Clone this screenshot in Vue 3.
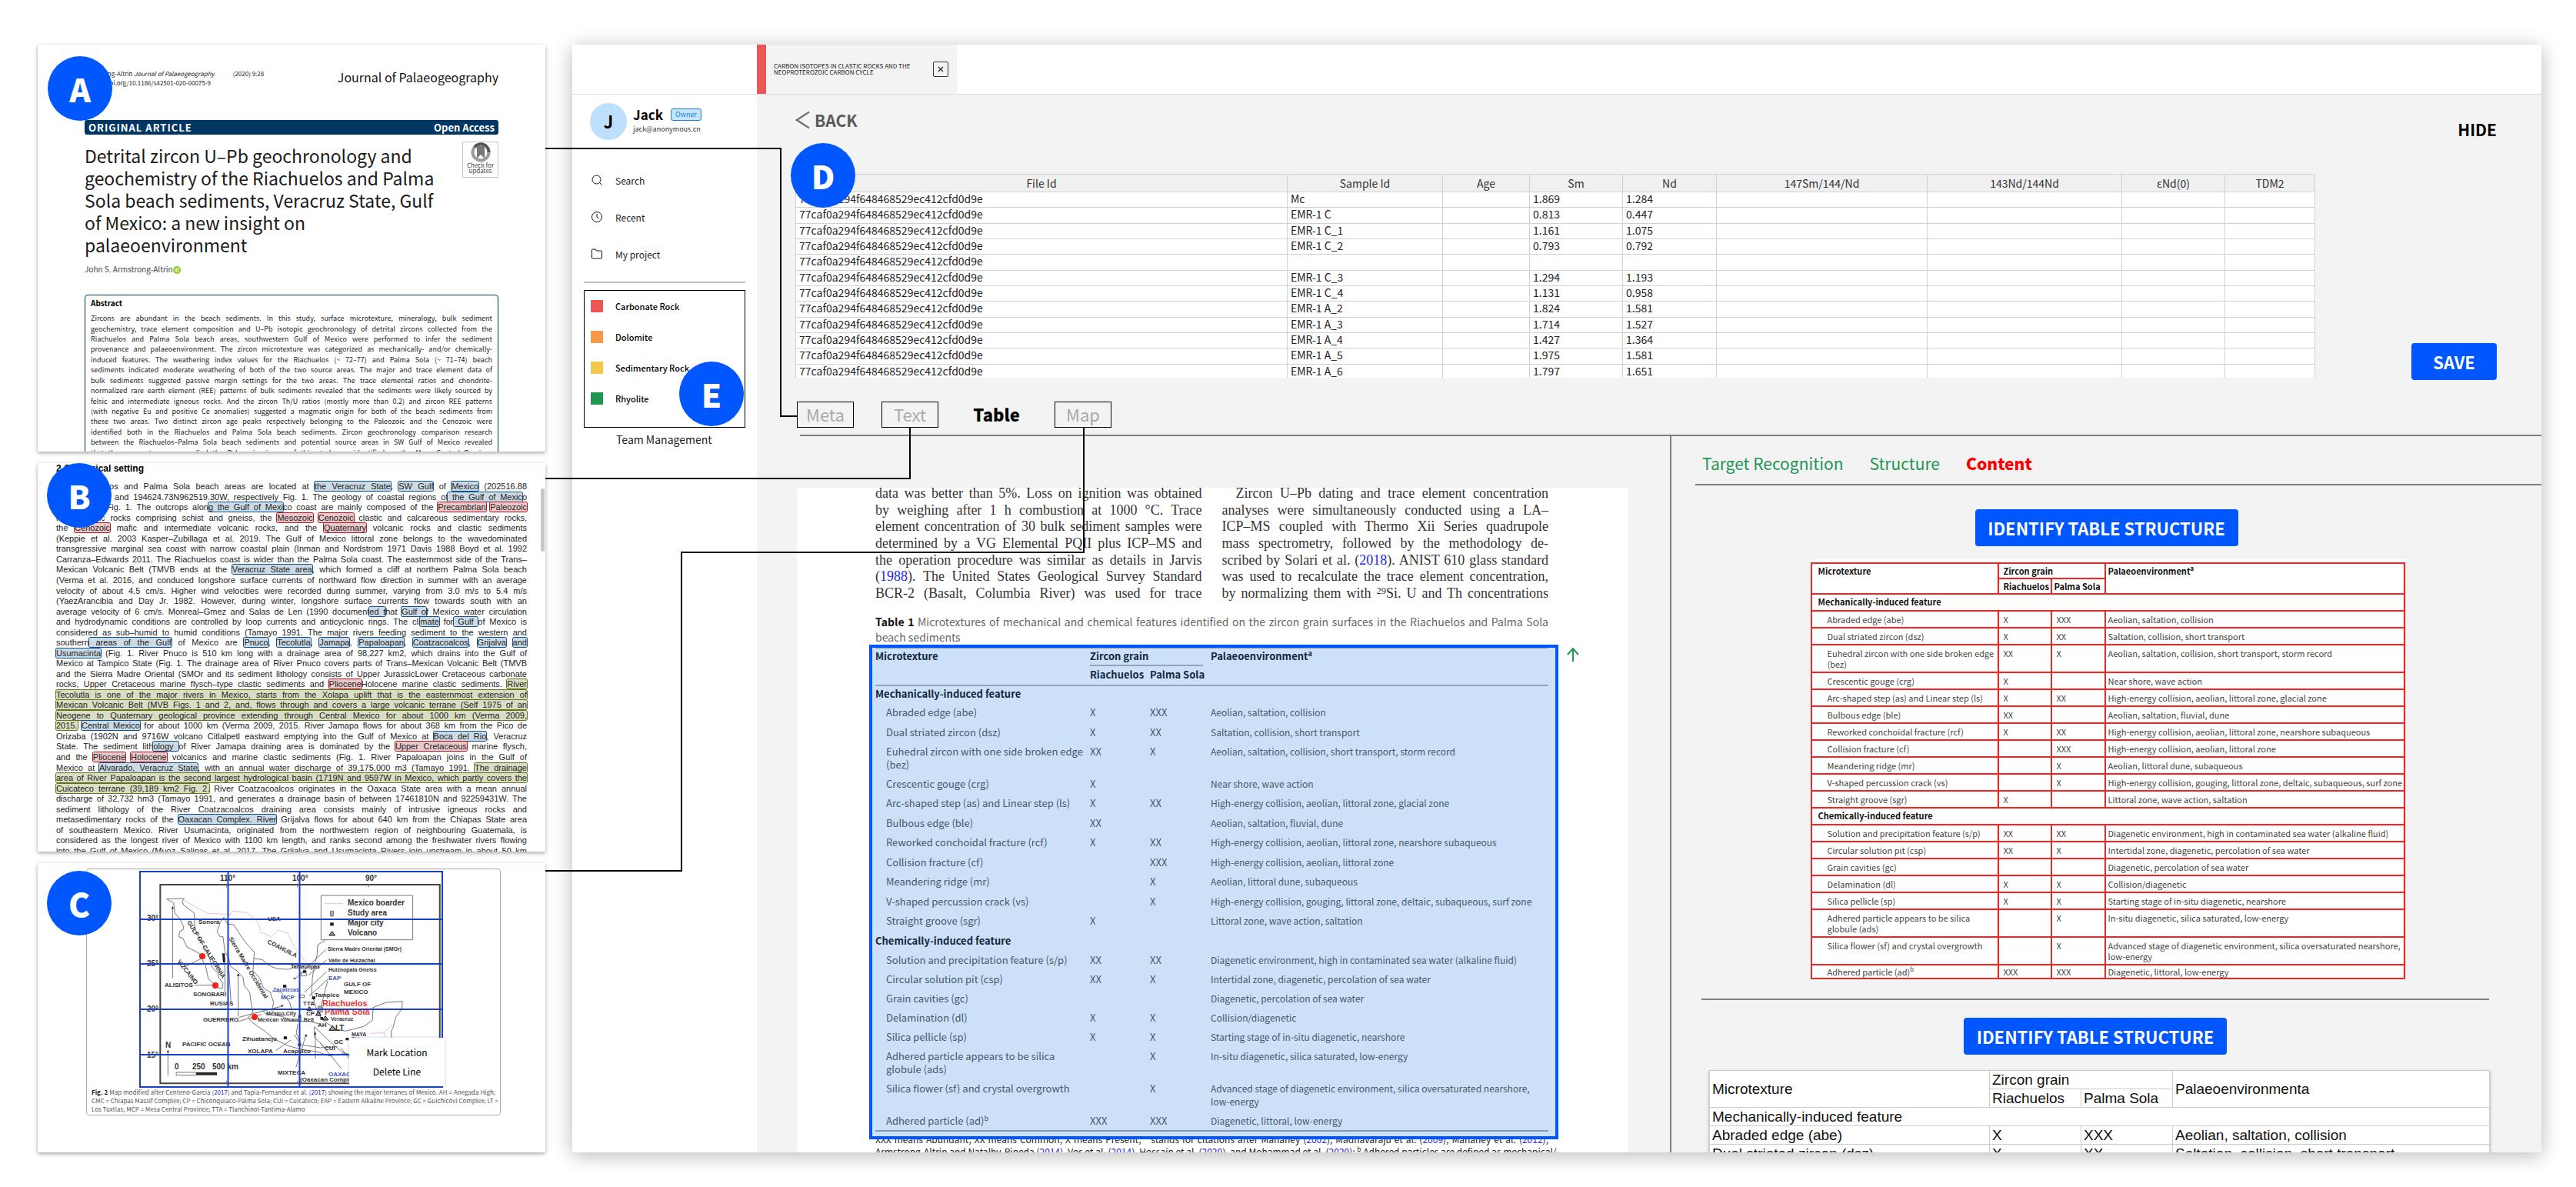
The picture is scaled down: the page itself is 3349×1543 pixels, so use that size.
<script setup>
const TAGS = { b: 'mark', r: 'mark', g: 'mark', l: 'a', s: 'sup', i: 'em', k: 'strong' }

// Inline notation: {x:text} where x picks the tag and its class.
function parse(line) {
  return line.split(/(\{[a-z]:[^}]*\})/).filter(Boolean).map((part) => {
    const m = part.match(/^\{([a-z]):([^}]*)\}$/)
    if (!m) return { tag: 'span', cls: '', text: part }
    return { tag: TAGS[m[1]], cls: 'm-' + m[1], text: m[2], href: m[1] === 'l' ? '#' : undefined }
  })
}

const abstractLines = [
  'Zircons are abundant in the beach sediments. In this study, surface microtexture, mineralogy, bulk sediment',
  'geochemistry, trace element composition and U–Pb isotopic geochronology of detrital zircons collected from the',
  'Riachuelos and Palma Sola beach areas, southwestern Gulf of Mexico were performed to infer the sediment',
  'provenance and palaeoenvironment. The zircon microtexture was categorized as mechanically- and/or chemically-',
  'induced features. The weathering index values for the Riachuelos (~ 72–77) and Palma Sola (~ 71–74) beach',
  'sediments indicated moderate weathering of both of the two source areas. The major and trace element data of',
  'bulk sediments suggested passive margin settings for the two areas. The trace elemental ratios and chondrite-',
  'normalized rare earth element (REE) patterns of bulk sediments revealed that the sediments were likely sourced by',
  'felsic and intermediate igneous rocks. And the zircon Th/U ratios (mostly more than 0.2) and zircon REE patterns',
  '(with negative Eu and positive Ce anomalies) suggested a magmatic origin for both of the beach sediments from',
  'these two areas. Two distinct zircon age peaks respectively belonging to the Paleozoic and the Cenozoic were',
  'identified both in the Riachuelos and Palma Sola beach sediments. Zircon geochronology comparison research',
  'between the Riachuelos–Palma Sola beach sediments and potential source areas in SW Gulf of Mexico revealed',
  'that the source terranes supplied the Paleozoic zircons of this study are identified as the Mesa Central Province',
]

const geoLines = [
  'The Riachuelos and Palma Sola beach areas are located at {b:the Veracruz State}, {b:SW Gulf} of {b:Mexico} (202516.88',
  'N962519.30W and 194624.73N962519.30W, respectively Fig. 1. The geology of coastal regions of{b: the Gulf of Mexic}o',
  'is shown in Fig. 1. The outcrops alon{b:g the Gulf of Mexi}co coast are mainly composed of the {r:Precambrian} {r:Paleozoic}',
  'metamorphic rocks comprising schist and gneiss, the {r:Mesozoic} {r:Cenozoic} clastic and calcareous sedimentary rocks,',
  'the {r:Cenozoic} mafic and intermediate volcanic rocks, and the {r:Quaternary} volcanic rocks and clastic sediments',
  '(Keppie et al. 2003 Kasper–Zubillaga et al. 2019. The Gulf of Mexico littoral zone belongs to the wavedominated',
  'transgressive marginal sea coast with narrow coastal plain (Inman and Nordstrom 1971 Davis 1988 Boyd et al. 1992',
  'Carranza–Edwards 2011. The Riachuelos coast is wider than the Palma Sola coast. The easternmost side of the Trans–',
  'Mexican Volcanic Belt (TMVB ends at the {b:Veracruz State area}, which formed a cliff at northern Palma Sola beach',
  '(Verma et al. 2016, and conduced longshore surface currents of northward flow direction in summer with an average',
  'velocity of about 4.5 cm/s. Higher wind velocities were recorded during summer, varying from 3.0 m/s to 5.4 m/s',
  '(YaezArancibia and Day Jr. 1982. However, during winter, longshore surface currents flow towards south with an',
  'average velocity of 6 cm/s. Monreal–Gmez and Salas de Len (1990 document{b:ed t}hat {b:Gulf o}f Mexico water circulation',
  'and hydrodynamic conditions are controlled by loop currents and anticyclonic rings. The cli{b:mate} for{b: Gulf }of Mexico is',
  'considered as sub–humid to humid conditions (Tamayo 1991. The major rivers feeding sediment to the western and',
  'southern{b: areas of the Gulf} of Mexico are {b:Pnuco}, {b:Tecolutla}, {b:Jamapa}, {b:Papaloapan}, {b:Coatzacoalcos}, {b:Grijalva} {b:and}',
  '{b:Usumacinta} (Fig. 1. River Pnuco is 510 km long with a drainage area of 98,227 km2, which drains into the Gulf of',
  'Mexico at Tampico State (Fig. 1. The drainage area of River Pnuco covers parts of Trans–Mexican Volcanic Belt (TMVB',
  'and the Sierra Madre Oriental (SMOr and its sediment lithology consists of Upper JurassicLower Cretaceous carbonate',
  'rocks, Upper Cretaceous marine flysch–type clastic sediments and {r:Pliocene}Holocene marine clastic sediments. {g:River}',
  '{g:Tecolutla is one of the major rivers in Mexico, starts from the Xolapa uplift that is the easternmost extension of}',
  '{g:Mexican Volcanic Belt (MVB Figs. 1 and 2, and, flows through and covers a large volcanic terrane (Self 1975 of an}',
  '{g:Neogene to Quaternary geological province extending through Central Mexico for about 1000 km (Verma 2009,}',
  '{g:2015.} {b:Central Mexico} for about 1000 km (Verma 2009, 2015. River Jamapa flows for about 368 km from the Pico de',
  'Orizaba (1902N and 9716W volcano Citlalpetl eastward emptying into the Gulf of Mexico at {b:Boca del Rio}, Veracruz',
  'State. The sediment lith{b:ology }of River Jamapa draining area is dominated by the {r:Upper Cretaceous} marine flysch,',
  'and the {r:Pliocene} {r:Holocene} volcanics and marine clastic sediments (Fig. 1. River Papaloapan joins in the Gulf of',
  'Mexico at {b:Alvarado, Veracruz State}, with an annual water discharge of 39,175,000 m3 (Tamayo 1991. {g:The drainage}',
  '{g:area of River Papaloapan is the second largest hydrological basin (1719N and 9597W in Mexico, which partly covers the}',
  '{g:Cuicateco terrane (39,189 km2 Fig. 2.} River Coatzacoalcos originates in the Oaxaca State area with a mean annual',
  'discharge of 32,732 hm3 (Tamayo 1991, and generates a drainage basin of between 17461810N and 92259431W. The',
  'sediment lithology of the River Coatzacoalcos draining area consists mainly of intrusive igneous rocks and',
  'metasedimentary rocks of the {b:Oaxacan Complex. River} Grijalva flows for about 640 km from the Chiapas State area',
  'of southeastern Mexico. River Usumacinta, originated from the northwestern region of neighbouring Guatemala, is',
  'considered as the longest river of Mexico with 1100 km length, and ranks second among the freshwater rivers flowing',
  'into the Gulf of Mexico (Muoz–Salinas et al. 2017. The Grijalva and Usumacinta Rivers join upstream in about 50 km',
]

const figCaption = [
  '{k:Fig. 2} Map modified after Centeno-García ({l:2017}) and Tapia-Fernandez et al. ({l:2017}) showing the major terranes of Mexico. AH = Anegada High;',
  'CMC = Chiapas Massif Complex; CP = Chiconquiaco-Palma Sola; CUI = Cuicateco; EAP = Eastern Alkaline Province; GC = Guichicovi Complex; LT =',
  'Los Tuxtlas; MCP = Mesa Central Province; TTA = Tlanchinol-Tantima-Alamo',
]

// x, baseline y, text, class, rotation
const mapLabels = [
  [105, 13, '110°', 'deg'], [199, 13, '100°', 'deg'], [294, 13, '90°', 'deg'],
  [10, 65, '30°', 'deg'], [10, 124, '25°', 'deg'], [10, 183, '20°', 'deg'], [10, 243, '15°', 'deg'],
  [271, 45, 'Mexico boarder', 'key'], [271, 58, 'Study area', 'key'], [271, 71, 'Major city', 'key'], [271, 84, 'Volcano', 'key'],
  [167, 65, 'USA', 'mid'], [77, 69, 'Sonora', 'mid'],
  [166, 94, 'COAHUILA', 'mid', 27], [116, 88, 'Sierra Madre Occidental', 'mid', 59], [62, 67, 'GULF OF CALIFORNIA', 'mid', 58],
  [49, 118, 'VIZCAINO', 'mid', 52],
  [33, 151, 'ALISITOS', 'mid'], [70, 163, 'SONOBARI', 'mid'], [92, 175, 'RUSIAS', 'mid'], [83, 196, 'GUERRERO', 'mid'],
  [134, 221, 'Zihuatanejo', 'mid'], [141, 237, 'XOLAPA', 'mid'], [187, 237, 'Acapulco', 'mid'],
  [56, 228, 'PACIFIC OCEAN', 'mid'], [34, 230, 'N', 'deg'],
  [46, 258, '0', 'key'], [69, 258, '250', 'key'], [95, 258, '500 km', 'key'],
  [180, 265, 'MIXTECA', 'mid'], [246, 267, 'OAXACA', 'mid blue'], [209, 274, '(Oaxacan Complex)', 'mid'],
  [241, 233, 'CUI', 'mid'], [253, 225, 'GC', 'mid'], [276, 215, 'MAYA', 'sm'], [275, 221, 'Chiapas', 'sm blue'],
  [255, 208, 'LT', 'key'], [232, 203, 'AH', 'mid'], [249, 195, 'Veracruz', 'sm'],
  [241, 187, 'Palma Sola', 'big red'], [238, 176, 'Riachuelos', 'big red'],
  [228, 164, 'Tampico', 'mid'], [266, 150, 'GULF OF', 'mid'], [266, 160, 'MEXICO', 'mid'],
  [246, 142, 'EAP', 'mid blue'], [246, 131, 'Huiznopala Gneiss', 'sm'], [246, 119, 'Valle de Huizachal', 'sm'],
  [245, 104, 'Sierra Madre Oriental (SMOr)', 'sm'], [197, 127, 'Tamaulipas', 'sm'],
  [174, 157, 'Zacatecas', 'sm blue'], [184, 167, 'MCP', 'mid blue'], [213, 175, 'TTA', 'mid'],
  [217, 188, 'CP', 'mid'], [165, 188, 'Mexico City', 'sm'], [154, 196, 'Mexican Volcanic Belt', 'sm'],
]

const rocks = [
  ['Carbonate Rock', '#eb5757'], ['Dolomite', '#f2994a'], ['Sedimentary Rock', '#f2c94c'], ['Rhyolite', '#219653'],
]

const columns = ['File Id', 'Sample Id', 'Age', 'Sm', 'Nd', '147Sm/144/Nd', '143Nd/144Nd', 'εNd(0)', 'TDM2']
const fileId = '77caf0a294f648468529ec412cfd0d9e'
const samples = [
  ['Mc', '1.869', '1.284'], ['EMR-1 C', '0.813', '0.447'], ['EMR-1 C_1', '1.161', '1.075'], ['EMR-1 C_2', '0.793', '0.792'],
  ['', '', ''], ['EMR-1 C_3', '1.294', '1.193'], ['EMR-1 C_4', '1.131', '0.958'], ['EMR-1 A_2', '1.824', '1.581'],
  ['EMR-1 A_3', '1.714', '1.527'], ['EMR-1 A_4', '1.427', '1.364'], ['EMR-1 A_5', '1.975', '1.581'], ['EMR-1 A_6', '1.797', '1.651'],
]

const columnOne = [
  'data was better than 5%. Loss on ignition was obtained',
  'by weighing after 1 h combustion at 1000 °C. Trace',
  'element concentration of 30 bulk sediment samples were',
  'determined by a VG Elemental PQII plus ICP–MS and',
  'the operation procedure was similar as details in Jarvis',
  '({l:1988}). The United States Geological Survey Standard',
  'BCR-2 (Basalt, Columbia River) was used for trace',
]
const columnTwo = [
  '\u2003Zircon U–Pb dating and trace element concentration',
  'analyses were simultaneously conducted using a LA–',
  'ICP–MS coupled with Thermo Xii Series quadrupole',
  'mass spectrometry, followed by the methodology de-',
  'scribed by Solari et al. ({l:2018}). ANIST 610 glass standard',
  'was used to recalculate the trace element concentration,',
  'by normalizing them with {s:29}Si. U and Th concentrations',
]
const footnote = [
  'XXX means Abundant; XX means Common; X means Present; {s:a} stands for citations after Mahaney ({l:2002}), Madhavaraju et al. ({l:2009}), Mahaney et al. ({l:2012}),',
  'Armstrong-Altrin and Natalhy-Pineda ({l:2014}), Vos et al. ({l:2014}), Hossain et al. ({l:2020}), and Mohammad et al. ({l:2020}); {s:b} Adhered particles are defined as mechanical/',
]

const groups = [
  {
    title: 'Mechanically-induced feature',
    rows: [
      ['Abraded edge (abe)', 'X', 'XXX', 'Aeolian, saltation, collision'],
      ['Dual striated zircon (dsz)', 'X', 'XX', 'Saltation, collision, short transport'],
      ['Euhedral zircon with one side broken edge\n(bez)', 'XX', 'X', 'Aeolian, saltation, collision, short transport, storm record'],
      ['Crescentic gouge (crg)', 'X', '', 'Near shore, wave action'],
      ['Arc-shaped step (as) and Linear step (ls)', 'X', 'XX', 'High-energy collision, aeolian, littoral zone, glacial zone'],
      ['Bulbous edge (ble)', 'XX', '', 'Aeolian, saltation, fluvial, dune'],
      ['Reworked conchoidal fracture (rcf)', 'X', 'XX', 'High-energy collision, aeolian, littoral zone, nearshore subaqueous'],
      ['Collision fracture (cf)', '', 'XXX', 'High-energy collision, aeolian, littoral zone'],
      ['Meandering ridge (mr)', '', 'X', 'Aeolian, littoral dune, subaqueous'],
      ['V-shaped percussion crack (vs)', '', 'X', 'High-energy collision, gouging, littoral zone, deltaic, subaqueous, surf zone'],
      ['Straight groove (sgr)', 'X', '', 'Littoral zone, wave action, saltation'],
    ],
  },
  {
    title: 'Chemically-induced feature',
    rows: [
      ['Solution and precipitation feature (s/p)', 'XX', 'XX', 'Diagenetic environment, high in contaminated sea water (alkaline fluid)'],
      ['Circular solution pit (csp)', 'XX', 'X', 'Intertidal zone, diagenetic, percolation of sea water'],
      ['Grain cavities (gc)', '', '', 'Diagenetic, percolation of sea water'],
      ['Delamination (dl)', 'X', 'X', 'Collision/diagenetic'],
      ['Silica pellicle (sp)', 'X', 'X', 'Starting stage of in-situ diagenetic, nearshore'],
      ['Adhered particle appears to be silica\nglobule (ads)', '', 'X', 'In-situ diagenetic, silica saturated, low-energy'],
      ['Silica flower (sf) and crystal overgrowth', '', 'X', 'Advanced stage of diagenetic environment, silica oversaturated nearshore,\nlow-energy'],
      ['Adhered particle (ad){s:b}', 'XXX', 'XXX', 'Diagenetic, littoral, low-energy'],
    ],
  },
]
const isTall = (row) => row.some((c) => c.includes('\n'))
const contentRows = groups[0].rows.slice(0, 2)
</script>

<template>
  <div class="board">
    <div class="papers">
      <section class="paper article">
        <header class="running">
          <p>Armstrong-Altrin <em>Journal of Palaeogeography</em><span class="issue">(2020) 9:28</span><br />https://doi.org/10.1186/s42501-020-00075-9</p>
          <p class="journal">Journal of Palaeogeography</p>
        </header>
        <div class="ribbon"><span class="kind">ORIGINAL ARTICLE</span><span>Open Access</span></div>
        <div class="heading">
          <h1>Detrital zircon U–Pb geochronology and<br />geochemistry of the Riachuelos and Palma<br />Sola beach sediments, Veracruz State, Gulf<br />of Mexico: a new insight on<br />palaeoenvironment</h1>
          <div class="crossmark">
            <svg width="26" height="26" viewBox="0 0 26 26"><circle cx="13" cy="13" r="10.5" fill="#fff" stroke="#9a9c9e" stroke-width="4" /><path d="M5 6A10.5 10.5 0 0 1 23.5 13" fill="none" stroke="#55585b" stroke-width="4" /><path d="M8 5h10v16l-5-5-5 5z" fill="#75787b" /></svg>
            <span>Check for updates</span>
          </div>
        </div>
        <p class="author">John S. Armstrong-Altrin<svg width="10" height="10" viewBox="0 0 10 10"><circle cx="5" cy="5" r="5" fill="#8fce1f" /><path d="M3 3v4M4.600 3v4h1a2 2 0 0 0 0-4z" stroke="#fff" fill="none" /></svg></p>
        <div class="abstract">
          <h2>Abstract</h2>
          <div class="lines">
            <p v-for="line in abstractLines" :key="line">{{ line }}</p>
          </div>
        </div>
        <span class="pin pin-a">A</span>
      </section>

      <section class="paper setting">
        <h2>2 Geological setting</h2>
        <div class="lines">
          <p v-for="line in geoLines" :key="line"><component :is="s.tag" v-for="(s, i) in parse(line)" :key="i" :class="s.cls">{{ s.text }}</component></p>
        </div>
        <i class="thumb"></i>
        <span class="pin pin-b">B</span>
      </section>

      <section class="paper mapping">
        <figure>
          <svg class="map" width="395" height="282" viewBox="0 0 395 282">
            <g class="ink" transform="scale(.4337 .3333) translate(-325 -62)">
              <rect x="388" y="116" width="838" height="775" class="frame" />
              <path d="M587 116v10M799 116v10M1013 116v10M388 250h10M388 424h10M388 602h10M388 779h10M587 881v10M799 881v10" />
              <path d="M407 172l53-2-6 10 4 15 32 32 2 60 18 52 20 40 14 60 16 20 4 20 12 22-2 20-14-4-28-34-8-50-20-50-36-24-12-34-12-6 2-20 10-6 2-14-12-32-14-20-4-40z" />
              <path d="M580 242l-12 22-10 36 10 20 8-2 6 60 12 26 4 30 22 20 16 24 4 32 16 26 4 38 6 40-14 20 12 20 34 30 32 34 40 26 40 14 50 10 34 16 28-6 26-4 12 20" />
              <path d="M578 244l12 26 18 2 30 60 32 48-4 70 20 30 12 40 20 16 10 40-6 30 14 16 30 4" />
              <path d="M668 404l26 4 18 22 26 14 36 2 30-18 24 0M690 600l14 20 50 10 24 16 60 4 24 8M724 530l24 4 28 40 6 34" />
              <path d="M882 333l-22 18-2 40-8 40-6 50-2 60 12 50 8 30 20 30 36 30 26 6 54-18 26-24 2-50 40-20 48-4-2 30-18 32-8 40-6 16 2 46M800 660l-4 36 14 40M850 670l0 40 30 40M850 670l40 50 40 46 30 20M790 700l18 40 60 12 52-4" />
              <path d="M425 480V205M490 508h60M600 575l-10-200M582 535V400M622 630V465M625 633l130-44M622 650l70-28M735 762l45-40M795 828l30-126M853 795V694M932 835l-64-102M955 795l-25-42M885 368l-95 118M887 410l-56 60M887 455l-66 80M890 485l-56 66M890 490l-26 130M510 405l-50 32M411 860v-96" />
              <path d="M422 210l3-10 4 10zM618 472l4-10 4 10zM750 584l8 3-6 6zM821 708l4-10 4 10zM849 700l3-10 4 10zM408 770l3-10 4 10zM786 480l6-2 2 8zM574 384h8v36h-6z" class="solid" />
              <path d="M756 506h10v11h-10zM816 450h10v11h-10zM843 552h10v11h-10zM802 624h8v11h-8zM758 708h10v11h-10zM801 735h8v11h-8zM944 713h9v10h-9zM868 632h8v11h-8z" class="solid" />
              <path d="M810 460h16v12h-16zM804 546h16v10h-16z" />
              <rect x="862" y="590" width="12" height="24" class="area" />
              <path d="M828 606l7-14 8 14zM854 626l8-16 8 16zM875 644l8-16 9 16zM894 684l10-18 11 18z" class="volcano" />
              <path d="M460 178l70 50 70 4 4-14 46 8 30 34 10 40 30 20 20-26 30 11 20 55 35 58M1018 696l40-2 24-30M1060 694l4 40" class="border" />
              <rect x="870" y="158" width="275" height="173" class="legend" />
              <path d="M882 190h54" class="border" />
              <rect x="898" y="219" width="9" height="20" class="area" />
              <rect x="897" y="264" width="11" height="12" class="solid" />
              <path d="M894 314l9-16 9 16z" class="volcano" />
              <rect x="436" y="848" width="60" height="11" /><rect x="496" y="848" width="62" height="11" class="solid" />
            </g>
            <text v-for="l in mapLabels" :key="l[2]" :class="l[3]" :transform="`translate(${l[0]} ${l[1]}) rotate(${l[4] || 0})`">{{ l[2] }}</text>
            <g fill="#f81c1c"><circle cx="82" cy="111" r="4" /><circle cx="99" cy="149" r="4" /><circle cx="150" cy="190" r="4" /></g>
            <path class="grid" d="M1 1h393v280H1zM115.500 0v282M208.500 0v282M0 63h395M0 121h395M0 180h395M0 239h395" />
          </svg>
          <div class="menu"><button>Mark Location</button><button>Delete Line</button></div>
          <figcaption>
            <p v-for="line in figCaption" :key="line"><component :is="s.tag" v-for="(s, i) in parse(line)" :key="i" :class="s.cls" :href="s.href">{{ s.text }}</component></p>
          </figcaption>
        </figure>
        <span class="pin pin-c">C</span>
      </section>
    </div>

    <div class="window">
      <div class="topbar">
        <div class="filetab">
          <span>CARBON ISOTOPES IN CLASTIC ROCKS AND THE<br />NEOPROTEROZOIC CARBON CYCLE</span>
          <button aria-label="Close"><svg width="8" height="8" viewBox="0 0 8 8"><path d="M1 1l6 6M7 1L1 7" stroke="#222" stroke-width="1.200" /></svg></button>
        </div>
      </div>
      <div class="body">
        <aside>
          <div class="user">
            <span class="avatar">J</span>
            <div>
              <p class="who"><strong>Jack</strong><span>Owner</span></p>
              <p class="mail">jack@anonymous.cn</p>
            </div>
          </div>
          <nav>
            <a href="#"><svg width="14" height="14" viewBox="0 0 14 14"><circle cx="6.500" cy="6.500" r="5.500" /><path d="M10.500 10.500L13.500 13.500" /></svg>Search</a>
            <a href="#"><svg width="14" height="14" viewBox="0 0 14 14"><circle cx="7" cy="7" r="6.500" /><path d="M7 3v4.500l2.500 1.200" /></svg>Recent</a>
            <a href="#"><svg width="14" height="14" viewBox="0 0 14 14"><path d="M.5 12V2Q.5 1 1.500 1H5l1.500 2h6q1 0 1 1v8q0 1-1 1h-11q-1 0-1-1z" /></svg>My project</a>
          </nav>
          <div class="rocks">
            <ul>
              <li v-for="r in rocks" :key="r[0]"><i :style="{ background: r[1] }"></i>{{ r[0] }}</li>
            </ul>
            <span class="pin pin-e">E</span>
          </div>
          <a href="#" class="team">Team Management</a>
        </aside>

        <main>
          <div class="data">
            <div class="sheet">
              <button class="back"><svg width="20" height="24" viewBox="0 0 20 24"><path d="M18 1.500L2 12l16 10.500" fill="none" stroke="#777" stroke-width="2.500" /></svg>BACK</button>
              <div class="scroller">
                <table class="samples">
                  <colgroup><col v-for="n in 9" :key="n" :class="'c' + n" /></colgroup>
                  <thead><tr><th v-for="c in columns" :key="c">{{ c }}</th></tr></thead>
                  <tbody>
                    <tr v-for="(r, i) in samples" :key="i"><td>{{ fileId }}</td><td>{{ r[0] }}</td><td></td><td>{{ r[1] }}</td><td>{{ r[2] }}</td><td></td><td></td><td></td><td></td></tr>
                  </tbody>
                </table>
              </div>
              <span class="pin pin-d">D</span>
            </div>
            <div class="actions"><button class="hide">HIDE</button><button class="primary save">SAVE</button></div>
          </div>
          <div class="tabs"><button>Meta</button><button>Text</button><button class="on">Table</button><button>Map</button></div>

          <div class="split">
            <div class="source">
              <div class="page">
                <div class="cols">
                  <div v-for="(col, n) in [columnOne, columnTwo]" :key="n" class="lines">
                    <p v-for="line in col" :key="line"><component :is="s.tag" v-for="(s, i) in parse(line)" :key="i" :class="s.cls" :href="s.href">{{ s.text }}</component></p>
                  </div>
                </div>
                <div class="caption">
                  <p class="full"><strong>Table 1</strong> Microtextures of mechanical and chemical features identified on the zircon grain surfaces in the Riachuelos and Palma Sola</p>
                  <p>beach sediments</p>
                </div>
                <div class="selection">
                  <table>
                    <colgroup><col class="k1" /><col class="k2" /><col class="k3" /><col /></colgroup>
                    <thead>
                      <tr><th rowspan="2">Microtexture</th><th colspan="2"><span class="under">Zircon grain</span></th><th rowspan="2">Palaeoenvironment<sup>a</sup></th></tr>
                      <tr><th>Riachuelos</th><th>Palma Sola</th></tr>
                    </thead>
                    <tbody v-for="g in groups" :key="g.title">
                      <tr><th colspan="4">{{ g.title }}</th></tr>
                      <tr v-for="r in g.rows" :key="r[0]" :class="{ tall: isTall(r) }">
                        <td v-for="(c, j) in r" :key="j"><component :is="s.tag" v-for="(s, i) in parse(c)" :key="i">{{ s.text }}</component></td>
                      </tr>
                    </tbody>
                  </table>
                  <svg class="arrow" width="16" height="18" viewBox="0 0 16 18"><path d="M8 18V2M1 9l7-8 7 8" fill="none" stroke="#219653" stroke-width="2" /></svg>
                </div>
                <div class="footnote">
                  <p v-for="line in footnote" :key="line"><component :is="s.tag" v-for="(s, i) in parse(line)" :key="i" :class="s.cls" :href="s.href">{{ s.text }}</component></p>
                </div>
              </div>
            </div>

            <div class="result">
              <div class="subtabs"><button>Target Recognition</button><button>Structure</button><button class="on">Content</button></div>
              <button class="primary identify">IDENTIFY TABLE STRUCTURE</button>
              <div class="detected">
                <table>
                  <colgroup><col class="d1" /><col class="d2" /><col class="d3" /><col /></colgroup>
                  <thead>
                    <tr><th rowspan="2">Microtexture</th><th colspan="2">Zircon grain</th><th rowspan="2">Palaeoenvironment<sup>a</sup></th></tr>
                    <tr><th>Riachuelos</th><th>Palma Sola</th></tr>
                  </thead>
                  <tbody v-for="g in groups" :key="g.title">
                    <tr class="group"><th colspan="4">{{ g.title }}</th></tr>
                    <tr v-for="r in g.rows" :key="r[0]" :class="{ tall: isTall(r) }">
                      <td v-for="(c, j) in r" :key="j"><component :is="s.tag" v-for="(s, i) in parse(c)" :key="i">{{ s.text }}</component></td>
                    </tr>
                  </tbody>
                </table>
              </div>
              <div class="content">
                <button class="primary identify">IDENTIFY TABLE STRUCTURE</button>
                <table>
                  <colgroup><col class="e1" /><col class="e2" /><col class="e2" /><col /></colgroup>
                  <tbody>
                    <tr><td rowspan="2">Microtexture</td><td colspan="2">Zircon grain</td><td rowspan="2">Palaeoenvironmenta</td></tr>
                    <tr><td>Riachuelos</td><td>Palma Sola</td></tr>
                    <tr><td colspan="4">Mechanically-induced feature</td></tr>
                    <tr v-for="r in contentRows" :key="r[0]"><td v-for="(c, j) in r" :key="j">{{ c }}</td></tr>
                  </tbody>
                </table>
              </div>
            </div>
          </div>
        </main>
      </div>
    </div>

    <svg class="wires" width="1500" height="1200" viewBox="0 0 1500 1200">
      <path d="M709 193H1015V541H1036M709 622H1183V556M1409 555V718H886V1132H709" />
    </svg>
  </div>
</template>

<style>
body { margin: 0; background: #fff; }
</style>

<style scoped>
.board { position: relative; display: flex; gap: 35px; box-sizing: border-box; height: 100vh; padding: 58px 45px 45px 49px; overflow: hidden; font-family: "Noto Sans CJK SC", "Noto Sans", sans-serif; color: #000; }
.board * { box-sizing: border-box; }
p, h1, h2, ul, figure { margin: 0; padding: 0; }
a { color: inherit; text-decoration: none; }
button { font: inherit; color: inherit; background: none; border: 0; padding: 0; cursor: pointer; white-space: nowrap; }
sup { font-size: 70%; line-height: 0; vertical-align: 5px; }
.m-l { color: #2424f0; }
.lines { display: grid; grid-auto-rows: 1fr; align-items: center; }
.lines p, .full, .footnote p { white-space: nowrap; text-align: justify; text-align-last: justify; }

.pin { position: absolute; z-index: 3; width: 84px; height: 84px; border-radius: 50%; background: #0057ff; color: #fff; font-size: 42px; line-height: 84px; font-weight: 900; text-align: center; }
.pin-a { left: 13px; top: 15px; }
.pin-b { left: 12px; top: 0; }
.pin-c { left: 12px; top: 10px; }
.pin-d { left: 44px; top: 63px; }
.pin-e { right: 1px; bottom: 1px; }

.papers { display: grid; grid-template-rows: minmax(0, 529fr) minmax(0, 505fr) minmax(0, 376fr); gap: 15px; width: 660px; flex: none; }
.paper { position: relative; overflow: hidden; min-height: 0; background: #fff; box-shadow: 0 2px 5px rgba(0, 0, 0, .35); }
.article { padding: 30px 61px 0; }
.setting { padding: 0 24px; }
.mapping { padding: 7px 58px 0 63px; }

.running { display: flex; justify-content: space-between; height: 68px; font-size: 8px; line-height: 12px; padding-top: 2px; color: #222; }
.issue { margin-left: 24px; }
.journal { font-size: 16px; line-height: 20px; color: #111; }
.ribbon { display: flex; justify-content: space-between; height: 19px; padding: 0 5px; border-radius: 3px; background: #003664; color: #fff; font-size: 13px; line-height: 19px; font-weight: 700; }
.kind { letter-spacing: 1px; }
.heading { display: flex; justify-content: space-between; align-items: flex-start; margin-top: 13px; }
h1 { font-size: 23px; line-height: 29px; font-weight: 400; color: #1a1a1a; white-space: nowrap; }
.crossmark { display: flex; flex-direction: column; align-items: center; width: 47px; height: 47px; margin-top: -4px; border: 1px solid #c4c4c4; text-align: center; font-size: 8px; line-height: 7px; color: #444; }
.author { margin-top: 9px; font-size: 10px; line-height: 16px; color: #444; }
.author svg { vertical-align: -2px; }
.abstract { margin-top: 25px; height: 220px; padding: 2px 7px; border: 1px solid #003664; border-radius: 4px; }
.abstract h2 { font-size: 10px; line-height: 16px; font-weight: 700; }
.abstract .lines { height: 188px; margin-top: 5px; font-size: 9px; line-height: 13px; color: #222; }

.setting { font-family: "Liberation Sans", Arial, sans-serif; }
.setting .pin { font-family: "Noto Sans CJK SC", sans-serif; }
.setting h2 { font-size: 12px; line-height: 14px; font-weight: 700; }
.setting .lines { height: 487px; margin-top: 10px; font-size: 11px; line-height: 13px; color: #222; }
mark { color: inherit; border-radius: 2px; padding: 0; }
.m-b { background: #cbdae5; box-shadow: 0 0 0 1px #0d5491; }
.m-r { background: #e9c8ca; box-shadow: 0 0 0 1px #b5161b; }
.m-g { background: #d9ddc4; box-shadow: 0 0 0 1px #63751a; }
.thumb { position: absolute; right: 1px; top: 33px; width: 5px; height: 82px; border-radius: 3px; background: #c6c6c6; }

figure { position: relative; height: 321px; padding: 2px 6px; border: 1px solid #aaa; border-radius: 4px; }
.map { display: block; margin-left: 62px; font-family: "Liberation Sans", Arial, sans-serif; font-weight: 700; fill: #333; }
.ink > * { fill: none; stroke: #777; stroke-width: 1px; vector-effect: non-scaling-stroke; }
.ink .frame { stroke: #444; stroke-width: 2px; }
.ink .solid { fill: #222; stroke: none; }
.ink .legend { fill: #fff; }
.ink .area { fill: #aaa; }
.ink .volcano { fill: #999; stroke: #111; }
.ink .border { stroke: #d8a0c8; stroke-dasharray: 2 1; }
.grid { fill: none; stroke: #1a3fc4; stroke-width: 2; }
.deg { font-size: 10px; }
.key { font-size: 10px; }
.mid { font-size: 8px; }
.sm { font-size: 7px; }
.big { font-size: 11px; }
.blue { fill: #3a55c8; }
.red { fill: #f03030; }
.menu { position: absolute; left: 341px; top: 219px; width: 124px; height: 63px; display: flex; flex-direction: column; justify-content: center; gap: 7px; background: #fff; border-radius: 2px; box-shadow: 0 0 4px rgba(60, 90, 180, .3); font-size: 12px; line-height: 18px; }
figcaption { font-size: 8px; line-height: 11px; color: #555; }
figcaption p { white-space: nowrap; text-align-last: justify; }
figcaption p:last-child { text-align-last: left; }
figcaption strong { color: #111; }

.window { flex: 1; min-width: 0; display: flex; flex-direction: column; overflow: hidden; background: #f3f3f3; box-shadow: 0 4px 24px rgba(0, 0, 0, .28); }
.topbar { flex: none; height: 65px; padding-left: 240px; background: #fff; border-bottom: 1px solid #ddd; }
.filetab { display: flex; justify-content: space-between; align-items: center; width: 260px; height: 64px; padding: 0 11px 0 10px; border-left: 12px solid #eb5757; background: #f3f3f3; font-size: 8px; line-height: 8px; color: #222; }
.filetab button { display: grid; place-items: center; width: 20px; height: 20px; border: 1px solid #333; border-radius: 2px; }
.body { flex: 1; min-height: 0; display: flex; }
aside { flex: none; width: 240px; background: #fff; padding: 11px 15px 0; }
.user { display: flex; gap: 8px; padding-left: 8px; }
.avatar { width: 48px; height: 48px; border-radius: 50%; background: #bde0fe; font-size: 22px; line-height: 46px; font-weight: 700; text-align: center; }
.user > div { padding-top: 5px; }
.who { display: flex; align-items: center; gap: 10px; font-size: 17px; line-height: 20px; }
.who span { width: 40px; height: 16px; border: 1px solid #1a7fe0; border-radius: 3px; background: #c4e4fc; color: #1a7fe0; font-size: 9px; line-height: 14px; text-align: center; }
.mail { margin-top: 3px; font-size: 9px; line-height: 12px; color: #333; }
nav { margin-top: 28px; padding-bottom: 12px; border-bottom: 2px solid #bdbdbd; }
nav a { display: flex; align-items: center; gap: 17px; height: 48px; padding-left: 10px; font-size: 12px; color: #222; }
nav svg { fill: none; stroke: #111; }
.rocks { position: relative; height: 179px; margin-top: 9px; border: 1px solid #000; }
ul { list-style: none; }
li { display: flex; align-items: center; gap: 16px; height: 40px; padding-left: 8px; font-size: 11px; font-weight: 500; }
li i { width: 16px; height: 16px; }
.team { display: block; margin: 5px 0 0 42px; font-size: 14px; line-height: 20px; color: #222; }

main { flex: 1; min-width: 0; display: flex; flex-direction: column; }
.data { flex: none; display: flex; }
.sheet { position: relative; flex: 1; padding: 18px 0 0 50px; }
.back { display: flex; align-items: center; gap: 5px; height: 30px; font-size: 21px; line-height: 30px; font-weight: 700; color: #5a5a5a; }
.scroller { height: 265px; margin-top: 55px; overflow: hidden; }
table { width: 100%; border-collapse: collapse; table-layout: fixed; }
th, td { padding: 0; text-align: left; white-space: pre; }
.samples { height: 268px; font-size: 14px; line-height: 16px; background: #fff; }
.samples th { height: 23px; text-align: center; font-weight: 400; background: #f0f0f0; color: #333; }
.samples th, .samples td { border: 1px solid #d2d2d2; }
.samples td { padding-left: 4px; vertical-align: top; color: #222; }
.c2 { width: 202px; } .c3 { width: 113px; } .c4 { width: 121px; } .c5 { width: 122px; } .c6 { width: 274px; } .c7 { width: 253px; } .c8 { width: 134px; } .c9 { width: 117px; }
.actions { width: 294px; display: flex; flex-direction: column; justify-content: space-between; align-items: flex-end; padding: 30px 58px 0 0; }
.hide { font-size: 21px; line-height: 30px; font-weight: 700; }
.primary { background: #0057ff; color: #fff; border-radius: 4px; height: 48px; font-size: 22px; line-height: 48px; font-weight: 700; }
.save { width: 111px; margin-bottom: -3px; }
.tabs { flex: none; display: flex; gap: 36px; padding: 31px 0 9px 52px; font-size: 22px; line-height: 30px; color: #aaa; }
.tabs button { width: 74px; height: 34px; padding-bottom: 2px; border: 1px solid #000; }
.tabs .on { width: 79px; border: 0; color: #000; font-weight: 900; }

.split { position: relative; flex: 1; min-height: 0; display: grid; grid-template-columns: minmax(0, 1189fr) minmax(0, 1131fr); grid-template-rows: minmax(0, 1fr); overflow: hidden; }
.split::before { content: ""; position: absolute; left: 56px; right: 0; top: 0; height: 2px; background: #7f7f7f; }
.source { padding: 69px 55px 0 52px; border-right: 2px solid #7f7f7f; }
.page { height: 900px; padding: 0 103px 0 102px; background: #fff; overflow: hidden; }
.cols { display: flex; gap: 26px; margin-top: -4px; font-family: "Liberation Serif", "Times New Roman", serif; font-size: 18px; line-height: 20px; color: #333; }
.cols .lines { flex: 1 1 0; min-width: 0; height: 152px; }
.caption { margin: 16px 0 0; font-size: 14px; line-height: 20px; color: #666; }
.caption strong { color: #111; }
.selection { position: relative; z-index: 1; height: 643px; margin: 0 -13px 0 -8px; padding: 0 9px 0 4px; border: 4px solid #0057ff; background: #cce1f7; font-size: 13px; line-height: 17px; color: #46586a; }
.selection table { border-top: 1px solid #8499ae; border-bottom: 2px solid #8499ae; }
.selection th { color: #12283e; vertical-align: top; padding-top: 1px; }
.selection thead { border-bottom: 2px solid #8fa5ba; }
.selection thead tr { height: 24px; }
.selection tbody tr { height: 25px; }
.selection tbody:nth-child(3) tr:nth-child(even):not(.tall) { height: 26px; }
.selection tbody tr.tall { height: 42px; }
.selection tbody:last-child tr:last-child { height: 23px; }
.selection td { vertical-align: top; padding-top: 1px; }
.selection td:first-child { padding-left: 14px; }
.selection td:last-child { font-size: 12px; }
.under { display: block; width: 147px; height: 22px; border-bottom: 2px solid #8fa5ba; }
.k1 { width: 279px; } .k2 { width: 78px; } .k3 { width: 79px; }
.arrow { position: absolute; right: -31px; top: 0; }
.footnote { margin-top: -8px; font-size: 12px; line-height: 16px; color: #222; }

.result { min-width: 0; display: flex; flex-direction: column; align-items: center; }
.subtabs { flex: none; align-self: stretch; display: flex; gap: 34px; margin: 22px 0 0 31px; padding: 0 0 12px 9px; border-bottom: 2px solid #7f7f7f; font-size: 21px; line-height: 30px; color: #219653; }
.subtabs .on { color: #f00; font-weight: 900; }
.identify { flex: none; width: 342px; margin-top: 31px; }
.detected { flex: none; width: 773px; margin: 17px 0 23px 3px; padding: 4px 0 2px; background: #fff; font-size: 11px; line-height: 14px; color: #444; }
.detected th, .detected td { border: 2px solid #ff1f1f; vertical-align: top; padding: 2px 0 0 6px; }
.detected th { color: #111; }
.detected th:first-child { padding-left: 8px; }
.detected tr + tr th:first-child { padding-left: 6px; }
.detected td:first-child { padding-left: 20px; }
.detected td { padding-top: 3px; }
.detected td:last-child, .detected th:last-child { padding-left: 3px; }
.detected thead tr { height: 20px; }
.detected tbody tr { height: 22px; }
.detected tbody .group th { padding-left: 8px; }
.detected tbody tr.tall { height: 36px; }
.detected tbody:last-child tr:last-child { height: 18px; }
.detected tbody:last-child tr:last-child td { padding-top: 1px; }
.d1 { width: 243px; } .d2 { width: 69px; } .d3 { width: 70px; }
.content { align-self: stretch; margin: 0 68px 0 39px; border-top: 2px solid #7f7f7f; text-align: center; }
.content .identify { margin-top: 23px; }
.content table { width: calc(100% - 9px); margin: 20px 0 0 10px; background: #fff; box-shadow: 0 2px 4px rgba(0, 0, 0, .3); font-family: "Liberation Sans", Arial, sans-serif; font-size: 19px; line-height: 22px; color: #111; }
.content tr { height: 24px; }
.content td { border: 1px solid #ccc; padding-left: 3px; }
.e1 { width: 364px; } .e2 { width: 119px; }

.wires { position: absolute; left: 0; top: 0; z-index: 2; pointer-events: none; fill: none; stroke: #000; stroke-width: 2; }
</style>
